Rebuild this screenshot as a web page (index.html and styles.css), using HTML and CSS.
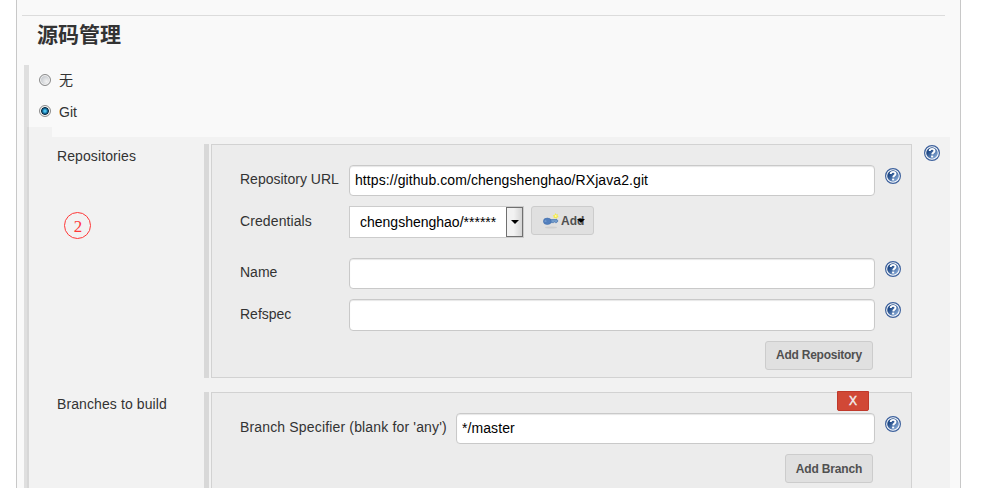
FILE: index.html
```html
<!DOCTYPE html>
<html lang="zh-CN">
<head>
<meta charset="utf-8">
<title>源码管理</title>
<link rel="stylesheet" href="styles.css">
</head>
<body>
<svg class="defs" width="0" height="0" aria-hidden="true">
  <defs>
    <linearGradient id="blue" x1="0" y1="0" x2="1" y2="1"><stop offset=".3" stop-color="#204a87"/><stop offset=".9" stop-color="#8eb0dc"/></linearGradient>
    <symbol id="help" viewBox="0 0 16 16">
      <circle cx="8" cy="8" r="7.4" fill="#fff" stroke="#3c609c" stroke-width="1.2"/>
      <circle cx="8" cy="8" r="5.8" fill="url(#blue)"/>
      <path d="M5.7 6.1C5.7 4.6 6.8 3.9 8.1 3.9C9.5 3.9 10.5 4.7 10.5 5.9C10.5 7.4 8.3 7.6 8.2 9.4" fill="none" stroke="#fff" stroke-width="1.9"/>
      <rect x="7.1" y="10.6" width="2.1" height="1.8" fill="#fff"/>
    </symbol>
  </defs>
</svg>
<main class="panel">
  <hr class="divider">
  <h2 class="title">源码管理</h2>
  <section class="scm">
    <label class="option none"><input class="radio" type="radio" name="scm"><span>无</span></label>
    <label class="option git"><input class="radio" type="radio" name="scm" checked><span>Git</span></label>
    <div class="nested">
      <div class="tab"></div>
      <div class="settings">
        <div class="group repositories">
          <div class="caption">Repositories<div class="step"><span>2</span></div></div>
          <div class="box">
            <div class="row url"><label class="label">Repository URL</label><input class="text" value="https://github.com/chengshenghao/RXjava2.git"><svg class="help"><use href="#help"/></svg></div>
            <div class="row credentials">
              <label class="label">Credentials</label>
              <div class="select"><span>chengshenghao/******</span><i class="drop"><svg width="8" height="4"><path d="M0 0H8L4 4Z"/></svg></i></div>
              <button class="button add"><svg class="key" width="16" height="16" viewBox="0 0 16 16"><ellipse cx="8" cy="14.5" rx="6" ry="1" fill="#cfcfcf"/><path d="M6 6.6H14L15 8L13.7 9.6H12.5L11.5 8.9L10.5 9.6H6Z" fill="#739ccb" stroke="#3f6ead" stroke-width=".7"/><ellipse cx="4.3" cy="8.3" rx="3.9" ry="3.2" fill="#527fbd" stroke="#416eac" stroke-width=".6"/><ellipse cx="2.5" cy="8" rx="1.1" ry=".6" fill="#8fb0da"/><path d="M12.5 0L13.3 1.5L15 1.3L14.6 2.7L15.7 4L14.2 4.5L13.5 6L12.3 5L10.6 5.2L10.8 3.8L9.7 2.5L11.5 2Z" fill="#f2e94e"/><circle cx="12.7" cy="3" r="1" fill="#fff9a8"/></svg><span>Add</span><svg class="caret" width="8" height="4"><path d="M0 0H8L4 4Z"/></svg></button>
            </div>
            <div class="row name"><label class="label">Name</label><input class="text"><svg class="help"><use href="#help"/></svg></div>
            <div class="row refspec"><label class="label">Refspec</label><input class="text"><svg class="help"><use href="#help"/></svg></div>
            <div class="actions"><button class="button">Add Repository</button></div>
          </div>
          <svg class="help outer"><use href="#help"/></svg>
        </div>
        <div class="group branches">
          <div class="caption">Branches to build</div>
          <div class="box">
            <button class="delete">X</button>
            <div class="row branch"><label class="label">Branch Specifier (blank for 'any')</label><input class="text" value="*/master"><svg class="help"><use href="#help"/></svg></div>
            <div class="actions"><button class="button narrow">Add Branch</button></div>
          </div>
        </div>
      </div>
    </div>
  </section>
</main>
</body>
</html>
```
FILE: styles.css
```css
* { box-sizing: border-box; }
body { margin: 0; height: 488px; overflow: hidden; background: #fff; color: #333; font: 14px/20px "Liberation Sans", "Noto Sans CJK SC", sans-serif; }
.defs { position: absolute; }
.panel { width: 945px; height: 488px; margin-left: 16px; border: solid #c8c8c8; border-width: 0 1px; background: #f9f9f9; display: flow-root; overflow: hidden; }
.divider { height: 1px; width: 923px; margin: 15px 0 0 5px; border: 0; background: #dcdcdc; }
.title { margin: 2px 0 0 20px; height: 47px; font: bold 21px/30px "Noto Sans CJK SC", sans-serif; }
.scm { width: 926px; height: 423px; margin-left: 7px; border-left: 5px solid #dfdfdf; }
.option { display: flex; align-items: center; }
.option.none { height: 31px; }
.option.git { height: 31px; }
.option span { margin-left: 8px; }
.option.none span { margin-bottom: 2px; }
.radio { appearance: none; width: 12px; height: 12px; margin: 0 0 1px 10px; border: 1px solid #8b8b8b; border-radius: 50%; background: radial-gradient(circle at 65% 65%, #f2f2f2, #c7cbd0 65%); box-shadow: inset 0 0 0 1px #f4f4f4; }
.radio:checked { background: radial-gradient(circle at 50% 50%, #4cc4ee 0 1px, #126b9d 2.4px, #09283c 3.6px, #e9e9e9 4.4px); }
.nested { margin-left: -2px; border-left: 2px solid #d7d7d7; height: 361px; }
.tab { width: 23px; height: 10px; background: #f2f2f2; }
.settings { height: 351px; width: 921px; padding-top: 7px; background: #f2f2f2; }
.group { display: flex; align-items: flex-start; padding-left: 28px; }
.caption { width: 147px; padding-top: 2px; letter-spacing: .1px; }
.step { display: flex; justify-content: center; align-items: center; width: 27px; height: 27px; margin: 46px 0 0 7px; border: 1px solid #ff3838; border-radius: 50%; color: #ff3838; font: 17px/20px "Liberation Serif", serif; }
.step { margin-left: 6.5px; }
.step span { padding: 3px 0 0 2px; }
.box { position: relative; width: 701px; border: 1px solid #d2d2d2; background: #ececec; padding-left: 28px; box-shadow: -2px 0 #f2f2f2, -7px 0 #d8d8d8; }
.group > .box { margin-left: 7px; }
.repositories .box { height: 234px; padding-top: 20px; clip-path: inset(0 0 0 -7px); }
.branches { margin-top: 14px; }
.branches .box { height: 130px; padding-top: 20px; }
.row { display: flex; align-items: flex-start; height: 31px; }
.label { width: 109px; padding-top: 4px; white-space: nowrap; }
.text { width: 526px; height: 31px; padding: 0 5px 1px; border: 1px solid #c9c9c9; border-radius: 4px; background: #fff; box-shadow: inset 0 1px 1px #e7e7e7; color: #000; font: 14px "Liberation Sans", sans-serif; letter-spacing: .08px; }
.help { width: 16px; height: 16px; margin: 3px 0 0 10px; flex: none; }
.help.outer { margin: 1px 0 0 12px; }
.row.credentials { margin-top: 10px; height: 32px; }
.credentials .label { padding-top: 5px; letter-spacing: .1px; }
.select { display: flex; width: 175px; height: 32px; padding-left: 10px; border: 1px solid #ccc; background: #fff; color: #000; line-height: 31px; }
.select span { width: 146px; }
.drop { display: flex; justify-content: center; align-items: center; width: 17px; height: 30px; border: 1px solid #707070; background: linear-gradient(90deg, #f2f2f2 45%, #d5d5d5); }
.button { display: flex; justify-content: center; align-items: center; width: 108px; height: 29px; padding: 0 0 1px; border: 1px solid #ccc; border-radius: 3px; background: #e0e0e0; color: #505050; font: bold 12px/16px "Liberation Sans", sans-serif; letter-spacing: -.25px; }
.button.add { width: 63px; margin-left: 7px; justify-content: flex-start; padding: 0 0 0 11px; letter-spacing: 0; }
.key { margin-right: 2px; }
.caret { margin-left: -7px; }
.row.name { margin-top: 20px; }
.row.refspec { margin-top: 10px; height: 32px; }
.refspec .text { height: 32px; }
.refspec .label { padding-top: 5px; }
.actions { display: flex; justify-content: flex-end; padding: 10px 38px 0 0; }
.button.narrow { width: 88px; padding: 0; letter-spacing: -.15px; }
.branch .label { width: 216px; letter-spacing: .16px; }
.branch .text { width: 419px; padding-bottom: 2px; }
.delete { position: absolute; right: 42px; top: -2px; width: 32px; height: 20px; padding: 0; border: 1px solid #c0392b; border-radius: 0 0 2px 2px; background: #d14836; color: #f1f1f1; font: 12px/16px "Liberation Sans", sans-serif; -webkit-text-stroke: .4px #f1f1f1; }
```
